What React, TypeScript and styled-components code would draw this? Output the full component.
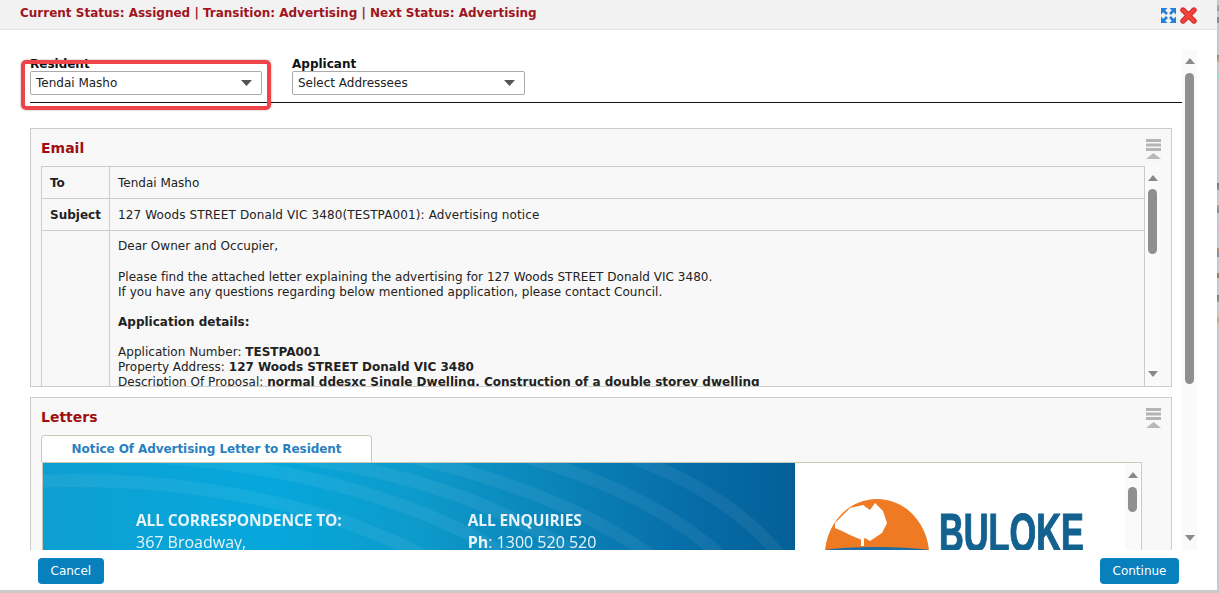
import React from 'react'
import styled, { createGlobalStyle } from 'styled-components'

const GlobalStyle = createGlobalStyle`
  html, body {
    margin: 0;
    padding: 0;
    height: 593px;
    overflow: hidden;
    background: #c9c9c9;
    font-family: 'DejaVu Sans', Verdana, sans-serif;
  }
`

const ExpandIcon = () => (
  <svg width="15" height="15" viewBox="0 0 15 15">
    <g fill="#2480d4">
      <path d="M0 0h6.500L0 6.500z" />
      <path d="M15 0H8.500L15 6.500z" />
      <path d="M0 15h6.500L0 8.500z" />
      <path d="M15 15H8.500L15 8.500z" />
    </g>
    <path d="M2 2l4 4M13 2L9 6M2 13l4-4M13 13L9 9" stroke="#2480d4" strokeWidth="2.600" />
  </svg>
)

const CloseIcon = () => (
  <svg width="17" height="17" viewBox="0 0 17 17">
    <path d="M3 3l11 11M14 3L3 14" stroke="#d92f2a" strokeWidth="5.400" strokeLinecap="round" />
    <path d="M3 3l11 11M14 3L3 14" stroke="#f0453c" strokeWidth="3" strokeLinecap="round" />
  </svg>
)

const Chevron = () => (
  <svg width="11" height="6" viewBox="0 0 11 6">
    <path d="M0 0h11L5.500 6z" fill="#555" />
  </svg>
)

const CollapseIcon = () => (
  <svg width="15" height="20" viewBox="0 0 15 20">
    <path d="M0 0h15v3H0zM0 4.500h15v3H0zM0 9h15v3H0z" fill="#b4b4b4" />
    <path d="M0 20L7.500 14 15 20z" fill="#b9b9b9" />
  </svg>
)

const Logo = () => (
  <LogoMark width="104" height="51" viewBox="0 0 104 51">
    <path d="M0 51C3 22 25 0 52 0s49 22 52 51z" fill="#ee7a24" />
    <path d="M10 24l8-8 7-7 13-3 7 5 5-7 8 8 4 12-5 10-12 8-5-3-3 2-5-2-7-3-8-4-7-3z" fill="#fff" />
    <path d="M36 40h3v7h-3z" fill="#fff" />
    <path d="M0 51C20 47 80 47 104 51z" fill="#1e6ea3" />
  </LogoMark>
)

const Root = styled.div`
  display: flex;
  align-items: flex-start;
`

const BackdropStrip = styled.div`
  width: 2px;
  height: 593px;
  flex: none;
  background: linear-gradient(
    180deg,
    #c9c9c9 5px,
    #b3a79a 5px,
    #8f9fb8 11px,
    #c9c9c9 11px,
    #c9c9c9 17px,
    #8b8b93 17px,
    #8b8b93 23px,
    #c9c9c9 23px,
    #c9c9c9 55px,
    #8a8478 55px,
    #c4ab94 62px,
    #c9c9c9 62px,
    #c9c9c9 73px,
    #a5d6c8 73px,
    #a5d6c8 78px,
    #c9c9c9 78px,
    #c9c9c9 183px,
    #777 183px,
    #7d95a0 190px,
    #c9c9c9 190px,
    #c9c9c9 205px,
    #c09c7c 205px,
    #6b8cb5 213px,
    #c9c9c9 213px,
    #c9c9c9 227px,
    #d7b9e0 227px,
    #d7b9e0 233px,
    #c9c9c9 233px,
    #c9c9c9 248px,
    #b78f6c 248px,
    #7391b4 257px,
    #c9c9c9 257px,
    #c9c9c9 273px,
    #91806e 273px,
    #91806e 278px,
    #c9c9c9 278px,
    #c9c9c9 295px,
    #777 295px,
    #a09a90 302px,
    #c9c9c9 302px,
    #c9c9c9 317px,
    #c4ab94 317px,
    #c4ab94 323px,
    #c9c9c9 323px
  );
`

const Page = styled.div`
  width: 1217px;
  height: 590px;
  flex: none;
  background: #fff;
  display: flex;
  flex-direction: column;
  position: relative;
  overflow: hidden;
`

const Header = styled.div`
  height: 30px;
  box-sizing: border-box;
  flex: none;
  background: #f2f2f2;
  border-bottom: 1px solid #e4e4e4;
  display: flex;
  align-items: center;
  justify-content: space-between;
  padding: 0 21px 3px 20px;
`

const StatusLine = styled.div`
  color: #a0141e;
  font-size: 12px;
  font-weight: 700;
`

const HeaderIcons = styled.div`
  display: flex;
  align-items: center;
  gap: 4px;
  margin: 4px -1px 0 0;
`

const Body = styled.div`
  flex: 1;
  min-height: 0;
  display: flex;
  overflow: hidden;
  padding-left: 30px;
`

const Content = styled.div`
  width: 1152px;
  flex: none;
  padding-top: 26px;
`

const FilterRow = styled.div`
  display: flex;
  gap: 30px;
  height: 46px;
  border-bottom: 1px solid #111;
`

const Field = styled.div`
  display: flex;
  flex-direction: column;
`

const FieldLabel = styled.label`
  font-size: 12px;
  font-weight: 700;
  line-height: 17px;
  margin-bottom: -2px;
  color: #111;
`

const Select = styled.div<{ $width: number }>`
  width: ${({ $width }) => $width}px;
  height: 24px;
  box-sizing: border-box;
  border: 1px solid #aaa;
  border-radius: 2px;
  display: flex;
  align-items: center;
  justify-content: space-between;
  padding: 0 9px 0 5px;
  font-size: 12px;
  color: #222;
  background: #fff;
`

const Highlight = styled.div`
  position: absolute;
  left: 21px;
  top: 60px;
  width: 250px;
  height: 50px;
  box-sizing: border-box;
  border: 4px solid #ee4349;
  border-radius: 5px;
  box-shadow: 0 0 2px rgba(90, 40, 40, 0.5);
`

const Panel = styled.section<{ $height: number; $top: number }>`
  margin-top: ${({ $top }) => $top}px;
  width: 1142px;
  height: ${({ $height }) => $height}px;
  box-sizing: border-box;
  background: #f8f8f8;
  border: 1px solid #ccc;
  overflow: hidden;
  display: flex;
  flex-direction: column;
  padding: 0 10px;
`

const PanelHead = styled.div`
  flex: none;
  display: flex;
  justify-content: space-between;
  height: 37px;
  padding: 10px 10px 0 0;
  box-sizing: border-box;
  margin-right: -10px;
`

const PanelTitle = styled.h3`
  margin: 1px 0 0;
  font-size: 14px;
  line-height: 17px;
  font-weight: 700;
  color: #a00f0f;
`

const EmailFrame = styled.div`
  display: flex;
  flex: 1;
  min-height: 0;
  width: 1119px;
`

const EmailTable = styled.div`
  width: 1104px;
  flex: none;
  box-sizing: border-box;
  border: 1px solid #ccc;
  border-bottom: 0;
  display: grid;
  grid-template-columns: 68px 1fr;
  grid-template-rows: 32px 32px 1fr;
`

const Cell = styled.div<{ $head?: boolean; $last?: boolean; $tracking?: number }>`
  box-sizing: border-box;
  font-size: 12px;
  color: #222;
  padding: 0 8px;
  letter-spacing: ${({ $tracking }) => $tracking ?? 0}px;
  font-weight: ${({ $head }) => ($head ? 700 : 400)};
  border-right: ${({ $head }) => ($head ? '1px solid #ccc' : '0')};
  border-bottom: ${({ $last }) => ($last ? '0' : '1px solid #ccc')};
  display: flex;
  align-items: center;
`

const Message = styled.div`
  padding: 8px 8px 0;
  font-size: 12px;
  line-height: 15px;
  letter-spacing: 0.03px;
  color: #222;
  overflow: hidden;
  height: 155px;
  box-sizing: border-box;

  b {
    letter-spacing: 0;
  }
`

const Para = styled.p<{ $gap?: number }>`
  margin: 0 0 ${({ $gap }) => $gap ?? 15}px;
`

const Scrollbar = styled.div<{ $inset?: number }>`
  flex: none;
  width: 15px;
  margin-top: ${({ $inset }) => $inset ?? 0}px;
  background: #fafafa;
  display: flex;
  flex-direction: column;
  align-items: center;
`

const ArrowUp = styled.div<{ $top: number }>`
  margin-top: ${({ $top }) => $top}px;
  width: 0;
  height: 0;
  border-left: 5px solid transparent;
  border-right: 5px solid transparent;
  border-bottom: 6px solid #8a8a8a;
`

const ArrowDown = styled.div<{ $bottom: number }>`
  margin-top: auto;
  margin-bottom: ${({ $bottom }) => $bottom}px;
  width: 0;
  height: 0;
  border-left: 5px solid transparent;
  border-right: 5px solid transparent;
  border-top: 6px solid #8a8a8a;
`

const Thumb = styled.div<{ $height: number; $gap: number }>`
  margin-top: ${({ $gap }) => $gap}px;
  width: 9px;
  height: ${({ $height }) => $height}px;
  border-radius: 5px;
  background: #8f8f8f;
`

const Tabs = styled.div`
  flex: none;
  display: flex;
  height: 27px;
`

const Tab = styled.div`
  width: 331px;
  box-sizing: border-box;
  background: #fff;
  border: 1px solid #ccc8b8;
  border-bottom: 0;
  border-radius: 4px 4px 0 0;
  color: #2a7fc0;
  font-size: 12px;
  font-weight: 700;
  letter-spacing: -0.07px;
  display: flex;
  align-items: center;
  justify-content: center;
`

const LetterFrame = styled.div`
  flex: none;
  width: 1100px;
  height: 100px;
  margin-left: 1px;
  box-sizing: border-box;
  border-top: 1px solid #ccc8b8;
  border-right: 1px solid #ccc8b8;
  border-left: 1px solid #ccc8b8;
  display: flex;
  background: #fff;
  overflow: hidden;
`

const Letterhead = styled.div`
  width: 1082px;
  flex: none;
  display: flex;
`

const Banner = styled.div`
  width: 752px;
  flex: none;
  position: relative;
  overflow: hidden;
  display: flex;
  gap: 126px;
  padding: 46px 0 0 93px;
  box-sizing: border-box;
  color: #e6f4fa;
  background: linear-gradient(90deg, #0e9fd2 0%, #06a8dc 30%, #0d9acb 50%, #0a84b9 68%, #066da8 86%, #045f97 100%);
`

const Waves = styled.svg`
  position: absolute;
  inset: 0;
`

const BannerBlock = styled.div`
  position: relative;
  font-family: 'Open Sans', sans-serif;
  font-size: 16px;
  line-height: 22px;
  white-space: nowrap;
  filter: blur(0.4px);
`

const BannerHeading = styled.div`
  font-size: 15.500px;
  font-weight: 700;
  letter-spacing: -0.1px;
`

const Brand = styled.div`
  flex: 1;
  display: flex;
  padding: 36px 0 0 30px;
  gap: 10px;
  background: #fff;
  overflow: hidden;
`

const LogoMark = styled.svg`
  flex: none;
  filter: blur(0.5px);
`

const BrandName = styled.div`
  width: 145px;
  flex: none;
  white-space: nowrap;
  font-family: 'Liberation Sans', Arial, sans-serif;
  font-size: 54.500px;
  line-height: 50px;
  margin-top: 9px;
  font-weight: 700;
  color: #12618f;
  -webkit-text-stroke: 1.2px #12618f;
  filter: blur(0.5px);
  transform: scaleX(0.63);
  transform-origin: left top;
`

const Footer = styled.div`
  flex: none;
  height: 40px;
  background: #fff;
  display: flex;
  justify-content: space-between;
  padding: 8px 38px 0 38px;
  box-sizing: border-box;
`

const Button = styled.button`
  height: 26px;
  box-sizing: border-box;
  border: 0;
  border-radius: 4px;
  background: #0780bd;
  color: #fff;
  font-family: 'DejaVu Sans', Verdana, sans-serif;
  font-size: 12px;
  padding: 0 12.500px;
`

export default function App() {
  return (
    <Root>
      <GlobalStyle />
      <Page>
        <Header>
          <StatusLine>Current Status: Assigned | Transition: Advertising | Next Status: Advertising</StatusLine>
          <HeaderIcons>
            <ExpandIcon />
            <CloseIcon />
          </HeaderIcons>
        </Header>
        <Body>
          <Content>
            <FilterRow>
              <Field>
                <FieldLabel>Resident</FieldLabel>
                <Select $width={232}>
                  Tendai Masho
                  <Chevron />
                </Select>
              </Field>
              <Field>
                <FieldLabel>Applicant</FieldLabel>
                <Select $width={233}>
                  Select Addressees
                  <Chevron />
                </Select>
              </Field>
            </FilterRow>
            <Panel $height={259} $top={25}>
              <PanelHead>
                <PanelTitle>Email</PanelTitle>
                <CollapseIcon />
              </PanelHead>
              <EmailFrame>
                <EmailTable>
                  <Cell $head>To</Cell>
                  <Cell>Tendai Masho</Cell>
                  <Cell $head>Subject</Cell>
                  <Cell $tracking={0.12}>127 Woods STREET Donald VIC 3480(TESTPA001): Advertising notice</Cell>
                  <Cell $head $last />
                  <Message>
                    <Para $gap={16}>Dear Owner and Occupier,</Para>
                    <Para>
                      Please find the attached letter explaining the advertising for 127 Woods STREET Donald VIC 3480.
                      <br />
                      If you have any questions regarding below mentioned application, please contact Council.
                    </Para>
                    <Para>
                      <b>Application details:</b>
                    </Para>
                    Application Number: <b>TESTPA001</b>
                    <br />
                    Property Address: <b>127 Woods STREET Donald VIC 3480</b>
                    <br />
                    Description Of Proposal: <b>normal ddesxc Single Dwelling, Construction of a double storey dwelling</b>
                  </Message>
                </EmailTable>
                <Scrollbar>
                  <ArrowUp $top={9} />
                  <Thumb $height={65} $gap={8} />
                  <ArrowDown $bottom={9} />
                </Scrollbar>
              </EmailFrame>
            </Panel>
            <Panel $height={160} $top={10}>
              <PanelHead>
                <PanelTitle>Letters</PanelTitle>
                <CollapseIcon />
              </PanelHead>
              <Tabs>
                <Tab>Notice Of Advertising Letter to Resident</Tab>
              </Tabs>
              <LetterFrame>
                <Letterhead>
                  <Banner>
                    <Waves width="752" height="100" viewBox="0 0 752 100">
                      <g fill="none" stroke="#fff" strokeOpacity="0.06" strokeWidth="13">
                        <path d="M0 18C140 14 300 40 410 110" />
                        <path d="M70 -8C220 -4 380 30 490 110" />
                        <path d="M210 -10C340 0 470 40 560 110" />
                        <path d="M340 -12C450 10 560 50 630 110" />
                        <path d="M460 -12C550 10 640 50 695 110" />
                        <path d="M570 -12C640 10 710 50 750 110" />
                      </g>
                    </Waves>
                    <BannerBlock>
                      <BannerHeading>ALL CORRESPONDENCE TO:</BannerHeading>
                      367 Broadway,
                    </BannerBlock>
                    <BannerBlock>
                      <BannerHeading>ALL ENQUIRIES</BannerHeading>
                      <b>Ph</b>: 1300 520 520
                    </BannerBlock>
                  </Banner>
                  <Brand>
                    <Logo />
                    <BrandName>BULOKE</BrandName>
                  </Brand>
                </Letterhead>
                <Scrollbar>
                  <ArrowUp $top={9} />
                  <Thumb $height={25} $gap={9} />
                </Scrollbar>
              </LetterFrame>
            </Panel>
          </Content>
          <Scrollbar $inset={20}>
            <ArrowUp $top={8} />
            <Thumb $height={311} $gap={9} />
            <ArrowDown $bottom={9} />
          </Scrollbar>
        </Body>
        <Footer>
          <Button>Cancel</Button>
          <Button>Continue</Button>
        </Footer>
        <Highlight />
      </Page>
      <BackdropStrip />
    </Root>
  )
}
